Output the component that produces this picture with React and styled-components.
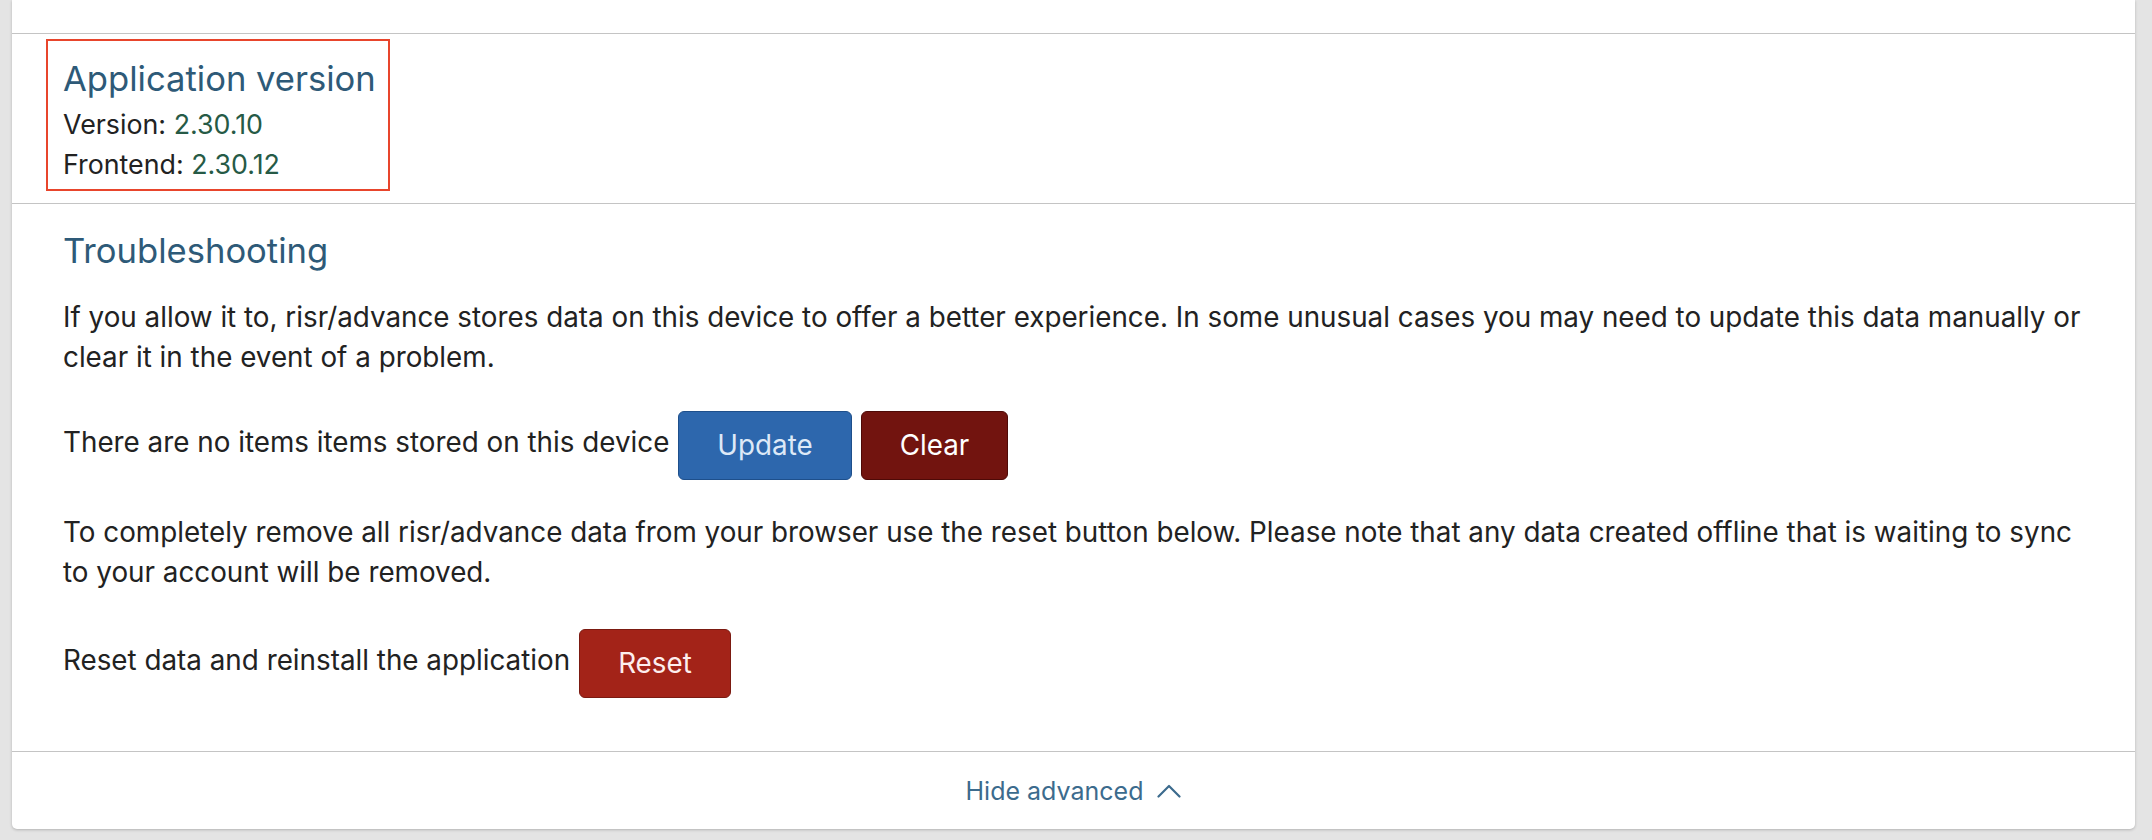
import React from "react";
import styled, { createGlobalStyle } from "styled-components";

const GlobalStyle = createGlobalStyle`
  html, body {
    margin: 0;
    padding: 0;
    background: #e4e4e4;
    font-family: Inter, Lato, "Noto Sans", sans-serif;
    color: #222;
  }
`;

const Page = styled.div`
  padding: 0 17px 10px 12px;
`;

const Card = styled.div`
  background: #fff;
  border-radius: 0 0 5px 5px;
  box-shadow: 0 1px 3px rgba(0, 0, 0, 0.22);
`;

const TopStub = styled.div`
  height: 33px;
`;

const Section = styled.section`
  border-top: 1px solid #c4c4c4;
  padding: ${(p) => p.$pad || "24px 48px 53px 51px"};
`;

const Highlight = styled.div`
  display: inline-block;
  margin-left: -17px;
  padding: 15px 12px 5px 15px;
  border: 2px solid #e8452c;
`;

const Heading = styled.h2`
  margin: 0;
  font-size: 34.6px;
  line-height: 44px;
  font-weight: 400;
  color: #2e5a78;
`;

const Meta = styled.div`
  font-size: 26.8px;
  line-height: 40px;
  color: #222;

  &:first-of-type {
    margin-top: 4px;
  }
`;

const Num = styled.span`
  color: #265a46;
`;

const Para = styled.p`
  margin: ${(p) => p.$top}px 0 0;
  font-size: 27.8px;
  line-height: 40px;
`;

const Row = styled.div`
  display: flex;
  align-items: center;
  gap: 9px;
  margin-top: ${(p) => p.$top}px;
  height: 69px;
`;

const RowText = styled.span`
  font-size: 27.8px;
  line-height: 40px;
  padding-bottom: 7px;
`;

const tones = {
  blue: { bg: "#2d67ad", border: "#1e4f8b", fg: "#dde9f7" },
  dark: { bg: "#72140f", border: "#4e0a07", fg: "#fff" },
  red: { bg: "#a32318", border: "#7b1a11", fg: "#fdeeee" },
};

const Button = styled.button`
  height: 69px;
  padding: 0 38px;
  border-radius: 6px;
  border: 1px solid ${(p) => tones[p.$tone].border};
  background: ${(p) => tones[p.$tone].bg};
  color: ${(p) => tones[p.$tone].fg};
  font-family: inherit;
  font-size: 27.8px;
  line-height: 1;
  cursor: pointer;
`;

const Footer = styled.div`
  border-top: 1px solid #c4c4c4;
  height: 77px;
  display: flex;
  align-items: center;
  justify-content: center;
  gap: 14px;
  color: #3c6b8d;
  font-size: 25px;
  line-height: 40px;
  cursor: pointer;
`;

const Chevron = () => (
  <svg width="24" height="14" viewBox="0 0 24 14" fill="none">
    <polyline
      points="1.5,12.5 12,2 22.5,12.5"
      stroke="#3c6b8d"
      strokeWidth="2.2"
      strokeLinecap="round"
      strokeLinejoin="round"
    />
  </svg>
);

export default function App() {
  return (
    <>
      <GlobalStyle />
      <Page>
        <Card>
          <TopStub />
          <Section $pad="5px 51px 12px">
            <Highlight>
              <Heading>Application version</Heading>
              <Meta>
                Version: <Num>2.30.10</Num>
              </Meta>
              <Meta>
                Frontend: <Num>2.30.12</Num>
              </Meta>
            </Highlight>
          </Section>
          <Section>
            <Heading>Troubleshooting</Heading>
            <Para $top={25}>
              If you allow it to, risr/advance stores data on this device to offer a better
              experience. In some unusual cases you may need to update this data manually or
              clear it in the event of a problem.
            </Para>
            <Row $top={34}>
              <RowText>There are no items items stored on this device</RowText>
              <Button $tone="blue">Update</Button>
              <Button $tone="dark">Clear</Button>
            </Row>
            <Para $top={32}>
              To completely remove all risr/advance data from your browser use the reset button
              below. Please note that any data created offline that is waiting to sync to your
              account will be removed.
            </Para>
            <Row $top={37}>
              <RowText>Reset data and reinstall the application</RowText>
              <Button $tone="red">Reset</Button>
            </Row>
          </Section>
          <Footer>
            <span>Hide advanced</span>
            <Chevron />
          </Footer>
        </Card>
      </Page>
    </>
  );
}
